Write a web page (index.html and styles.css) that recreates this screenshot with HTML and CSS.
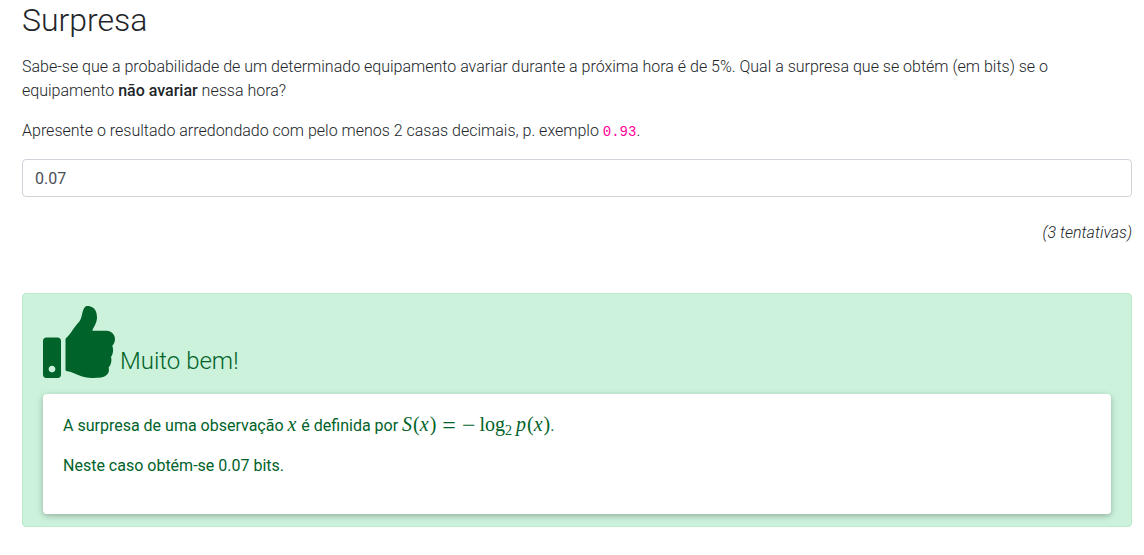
FILE: index.html
```html
<!DOCTYPE html>
<html lang="pt">
<head>
<meta charset="utf-8">
<meta name="viewport" content="width=device-width, initial-scale=1">
<title>Surpresa</title>
<link rel="stylesheet" href="styles.css">
</head>
<body>
<main class="page">
  <h2 class="title">Surpresa</h2>
  <div class="question" id="question">
    <p>Sabe-se que a probabilidade de um determinado equipamento avariar durante a próxima hora é de 5%. Qual a surpresa que se obtém (em bits) se o equipamento <strong>não avariar</strong> nessa hora?</p>
    <p>Apresente o resultado arredondado com pelo menos 2 casas decimais, p. exemplo <code>0.93</code>.</p>
  </div>
  <input class="answer" type="text" value="0.07" aria-labelledby="question">
  <p class="tries"><em>(3 tentativas)</em></p>
  <section class="alert">
    <h4 class="alert-title">
      <svg class="thumb" viewBox="0 0 512 512" aria-hidden="true"><path d="M104 224H24c-13.255 0-24 10.745-24 24v240c0 13.255 10.745 24 24 24h80c13.255 0 24-10.745 24-24V248c0-13.255-10.745-24-24-24zM64 472c-13.255 0-24-10.745-24-24s10.745-24 24-24 24 10.745 24 24-10.745 24-24 24zM384 81.452c0 42.416-25.97 66.208-33.277 94.548h101.723c33.397 0 59.397 27.746 59.553 58.098.084 17.938-7.546 37.249-19.439 49.197l-.11.11c9.836 23.337 8.237 56.037-9.308 79.469 8.681 25.895-.069 57.704-16.382 74.757 4.298 17.598 2.244 32.575-6.148 44.632C440.202 511.587 389.616 512 346.839 512l-2.845-.001c-48.287-.017-87.806-17.598-119.56-31.725-15.957-7.099-36.821-15.887-52.651-16.178-6.54-.12-11.783-5.457-11.783-11.998v-213.77c0-3.2 1.282-6.271 3.558-8.521 39.614-39.144 56.648-80.587 89.117-113.111 14.804-14.832 20.188-37.236 25.393-58.902C282.515 39.293 291.817 0 312 0c24 0 72 8 72 81.452z"/></svg>
      <span>Muito bem!</span>
    </h4>
    <div class="card">
      <p>A surpresa de uma observação <span class="math"><i>x</i></span> é definida por <span class="math"><i>S</i>(<i>x</i>)<span class="rel">=</span><span class="op">−</span>log<sub>2</sub><i>p</i>(<i>x</i>)</span>.</p>
      <p>Neste caso obtém-se 0.07 bits.</p>
    </div>
  </section>
</main>
</body>
</html>
```
FILE: styles.css
```css
* { box-sizing: border-box; }

body {
  margin: 0;
  background: #fff;
  color: #212529;
  font: 300 16px/24px Roboto, "Liberation Sans", sans-serif;
}

.page { padding: 1px 12px 28px 22px; }

.title {
  margin: 0 0 16px;
  font-size: 32px;
  line-height: 38px;
  font-weight: 300;
}

p { margin: 0 0 16px; }

strong { font-weight: 500; }

code {
  color: #f09;
  font: 400 14px "Liberation Mono", monospace;
}

.answer {
  display: block;
  width: 100%;
  height: 38px;
  padding: 6px 12px;
  border: 1px solid #ced4da;
  border-radius: 4px;
  background: #fff;
  color: #495057;
  font: 400 16px/24px Roboto, "Liberation Sans", sans-serif;
}

.tries {
  margin: 24px 0 48px;
  text-align: right;
}

.alert {
  padding: 12px 20px;
  border: 1px solid #b8ecca;
  border-radius: 4px;
  background: #ccf2db;
  color: #006329;
}

.alert-title {
  display: flex;
  align-items: flex-end;
  gap: 5px;
  margin: 0 0 16px;
  font-size: 24px;
  line-height: 34px;
  font-weight: 300;
}

.thumb {
  width: 72px;
  height: 72px;
  fill: currentColor;
}

.card {
  padding: 20px;
  border-radius: 4px;
  background: #fff;
  box-shadow: 0 2px 5px rgba(0, 0, 0, .16), 0 2px 10px rgba(0, 0, 0, .12);
  font-weight: 400;
}

.math {
  font-family: "Liberation Serif", serif;
  font-size: 20px;
  line-height: 1;
  white-space: nowrap;
}

.math i { margin-right: 1px; }

.math sub {
  margin-right: 4px;
  font-size: 14px;
  line-height: 0;
  vertical-align: -4px;
}

.rel,
.op {
  font-size: 24px;
  line-height: 0;
  vertical-align: -2px;
}

.rel { margin: 0 6px; }
.op { margin-right: 4px; }
```
